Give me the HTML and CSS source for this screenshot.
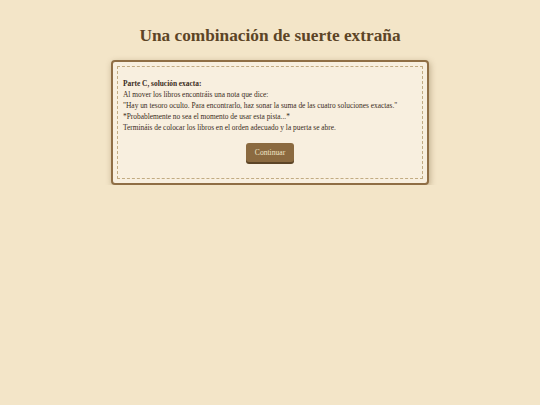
FILE: index.html
```html
<!DOCTYPE html>
<html lang="es">
<head>
  <meta charset="UTF-8">
  <title>Una combinación de suerte extraña</title>
  <link rel="stylesheet" href="styles.css">
</head>
<body>
  <h1 class="title">Una combinación de suerte extraña</h1>

  <div class="card">
    <div class="card-inner">
      <p class="heading">Parte C, solución exacta:</p>
      <p>Al mover los libros encontráis una nota que dice:</p>
      <p>"Hay un tesoro oculto. Para encontrarlo, haz sonar la suma de las cuatro soluciones exactas."</p>
      <p>*Probablemente no sea el momento de usar esta pista...*</p>
      <p>Termináis de colocar los libros en el orden adecuado y la puerta se abre.</p>
      <div class="actions">
        <button class="btn">Continuar</button>
      </div>
    </div>
  </div>
</body>
</html>
```
FILE: styles.css
```css
body {
  margin: 0;
  background: #f3e5c8;
  font-family: "Liberation Serif", Georgia, serif;
  color: #3a2c1c;
}

.title {
  margin: 26px 0 0;
  text-align: center;
  font-size: 17.3px;
  line-height: 20px;
  color: #5c4426;
}

.card {
  width: 306px;
  margin: 14px auto 0;
  background: #f8efdf;
  border: 2px solid #8f6e45;
  border-radius: 4px;
  padding: 4px;
  box-shadow: 1px 2px 6px rgba(90, 60, 20, 0.35);
}

/* inner dashed frame */
.card-inner {
  border: 1px dashed #c2ab82;
  padding: 11px 5px 16px;
}

.card-inner p {
  margin: 0;
  font-size: 7.4px;
  line-height: 11px;
}

.card-inner .heading {
  font-weight: bold;
}

.actions {
  display: flex;
  justify-content: center;
  margin-top: 10px;
}

.btn {
  font-family: inherit;
  font-size: 7.6px;
  color: #f3e5c8;
  background: #8b6a40;
  border: none;
  border-radius: 3px;
  padding: 0 9px;
  height: 19px;
  box-shadow: 0 2px 0 #5c4426;
}
```
